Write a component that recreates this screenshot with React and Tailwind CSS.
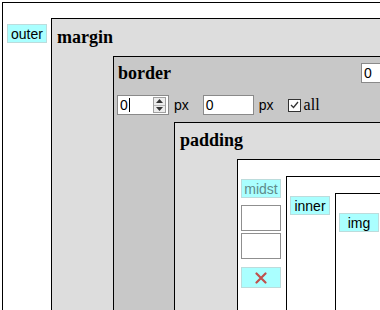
import React from 'react';

const SANS = { fontFamily: '"Liberation Sans", Arial, sans-serif' };

const Tag = ({ text, dim }) => (
  <div
    className={`w-[40px] h-[19px] bg-[#aaffff] border border-[#bcdcdc] flex items-center justify-center text-[14px] leading-none ${
      dim ? 'text-[#5f8b8b]' : 'text-black'
    }`}
    style={SANS}
  >
    {text}
  </div>
);

const Title = ({ children, pad }) => (
  <div className={`font-['Liberation_Serif',serif] font-bold text-[18px] leading-[20px] text-black ${pad}`}>
    {children}
  </div>
);

const Field = ({ w, value }) => (
  <div className={`${w} h-[20px] bg-white border border-[#8a8a8a] flex items-center pl-[2px] text-[14px] text-black`} style={SANS}>
    {value}
  </div>
);

const NumberField = () => (
  <div className="w-[52px] h-[20px] bg-white border border-[#8a8a8a] flex items-center pl-[2px] text-[14px] text-black" style={SANS}>
    <span>0</span>
    <span className="w-px h-[14px] bg-black ml-px"></span>
    <div className="ml-auto mr-[2px] w-[13px] h-[16px] border border-[#a0a0a0] bg-[#ececec] flex flex-col">
      <div className="flex-1 flex items-center justify-center border-b border-[#b8b8b8]">
        <svg width="7" height="4" viewBox="0 0 7 4"><path d="M0 4 L3.5 0 L7 4 Z" fill="#333" /></svg>
      </div>
      <div className="flex-1 flex items-center justify-center">
        <svg width="7" height="4" viewBox="0 0 7 4"><path d="M0 0 L3.5 4 L7 0 Z" fill="#333" /></svg>
      </div>
    </div>
  </div>
);

const Checkbox = () => (
  <div className="w-[13px] h-[13px] border border-[#333] bg-white flex items-center justify-center">
    <svg width="9" height="8" viewBox="0 0 9 8">
      <path d="M1 4 L3.5 6.5 L8 1" fill="none" stroke="#333" strokeWidth="1.3" />
    </svg>
  </div>
);

export default function App() {
  return (
    <div className="w-[380px] h-[310px] overflow-hidden bg-white pl-[2px] pt-[2px]">
      {/* outer */}
      <div className="w-[700px] h-[600px] border border-black bg-white flex">
        <div className="w-[48px] shrink-0 pl-[4px] pt-[21px]">
          <Tag text="outer" />
        </div>

        {/* margin */}
        <div className="flex-1 mt-[15px] border border-black bg-[#dddddd] flex flex-col">
          <div className="h-[37px]">
            <Title pad="pl-[5px] pt-[8px]">margin</Title>
          </div>

          {/* border */}
          <div className="flex-1 ml-[61px] border border-black bg-[#c8c8c8] flex flex-col">
            <div className="h-[38px] flex items-start">
              <div className="w-[247px] shrink-0">
                <Title pad="pl-[4px] pt-[6px]">border</Title>
              </div>
              <div className="mt-[6px]">
                <Field w="w-[51px]" value="0" />
              </div>
            </div>

            <div className="h-[20px] flex items-center pl-[3px]">
              <NumberField />
              <span className="ml-[5px] text-[14px] text-black" style={SANS}>px</span>
              <div className="ml-[14px]">
                <Field w="w-[51px]" value="0" />
              </div>
              <span className="ml-[5px] text-[14px] text-black" style={SANS}>px</span>
              <div className="ml-[14px]">
                <Checkbox />
              </div>
              <span className="ml-[3px] font-['Liberation_Serif',serif] text-[16px] text-black">all</span>
            </div>

            {/* padding */}
            <div className="flex-1 mt-[7px] ml-[60px] border border-black bg-[#dddddd] flex flex-col">
              <div className="h-[36px]">
                <Title pad="pl-[5px] pt-[7px]">padding</Title>
              </div>

              {/* midst */}
              <div className="flex-1 ml-[62px] border border-black bg-white flex">
                <div className="w-[48px] shrink-0 pl-[3px] pt-[19px] flex flex-col">
                  <Tag text="midst" dim />
                  <div className="mt-[7px] w-[40px] h-[26px] border border-[#8f8f8f] bg-white"></div>
                  <div className="mt-[2px] w-[40px] h-[26px] border border-[#8f8f8f] bg-white"></div>
                  <div className="mt-[8px] w-[40px] h-[21px] bg-[#aaffff] border border-[#bcdcdc] flex items-center justify-center">
                    <svg width="12" height="12" viewBox="0 0 12 12">
                      <path d="M1.5 1.5 L10.5 10.5 M10.5 1.5 L1.5 10.5" stroke="#c0504d" strokeWidth="2.2" strokeLinecap="round" />
                    </svg>
                  </div>
                </div>

                {/* inner */}
                <div className="flex-1 mt-[16px] border border-black bg-white flex">
                  <div className="w-[48px] shrink-0 pl-[3px] pt-[19px]">
                    <Tag text="inner" />
                  </div>

                  {/* img */}
                  <div className="flex-1 mt-[16px] border border-black bg-white">
                    <div className="pl-[3px] pt-[19px]">
                      <Tag text="img" />
                    </div>
                  </div>
                </div>
              </div>
            </div>
          </div>
        </div>
      </div>
    </div>
  );
}
